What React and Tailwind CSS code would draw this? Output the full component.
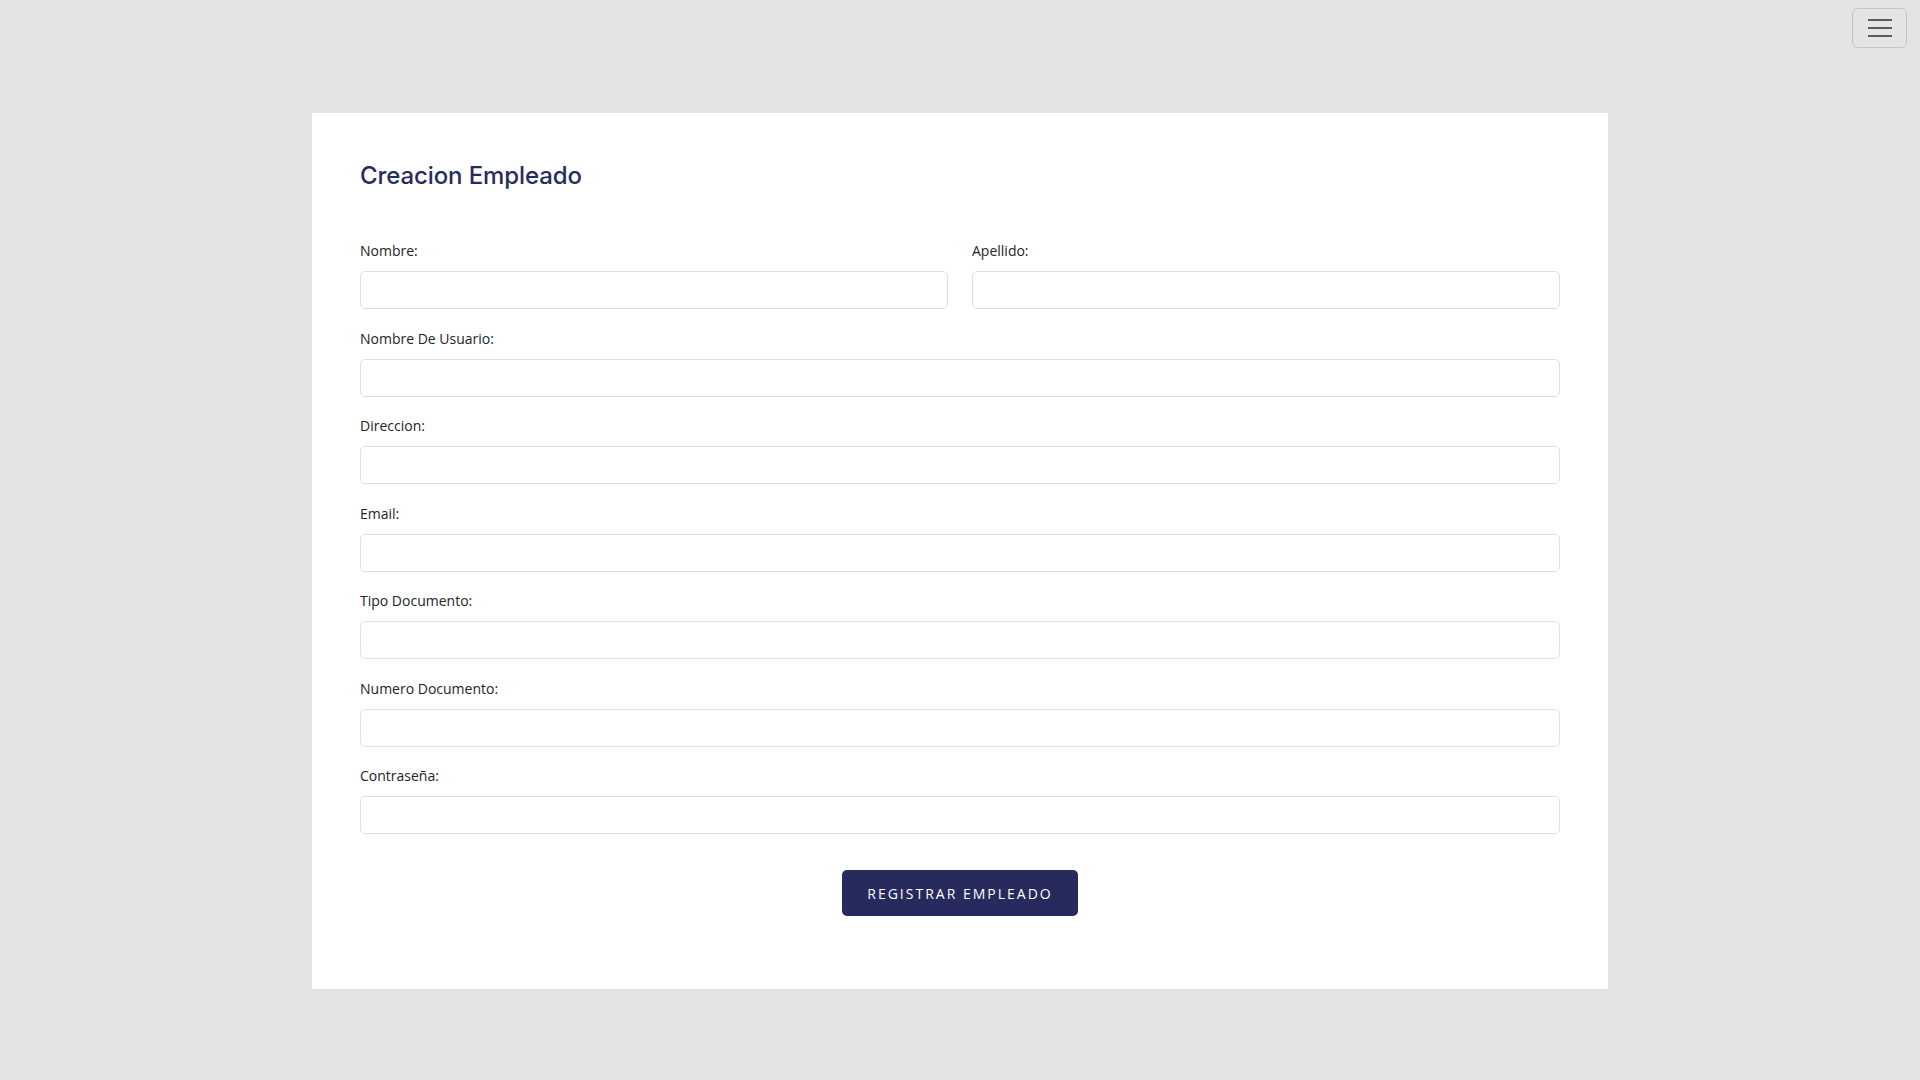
import React from "react";

const labelCls =
  "block text-[14px] leading-[21px] mb-[10px] text-[#212529] font-['Open_Sans','Noto_Sans',sans-serif]";
const inputCls =
  "block w-full h-[38px] rounded-[5px] border border-[#dee2e6] bg-white px-3 text-[14px] outline-none";

function Field({ label, type = "text" }) {
  return (
    <div className="flex flex-col">
      <label className={labelCls}>{label}</label>
      <input type={type} className={inputCls} />
    </div>
  );
}

export default function App() {
  return (
    <div className="min-h-[1080px] w-full bg-[#e4e4e4] font-['Open_Sans',sans-serif]">
      <div className="flex justify-end pt-[8px] pr-[13px]">
        <button className="flex h-[40px] w-[55px] flex-col items-center justify-center gap-[6px] rounded-[6px] border border-[#c6c6c6] bg-transparent">
          <span className="block h-[2px] w-[24px] bg-[#575c62]" />
          <span className="block h-[2px] w-[24px] bg-[#575c62]" />
          <span className="block h-[2px] w-[24px] bg-[#575c62]" />
        </button>
      </div>
      <div className="mx-auto mt-[65px] w-[1296px] bg-white px-[48px] pt-[48px] pb-[73px]">
        <h2 className="text-[24px] leading-[29px] font-medium text-[#272b5e] font-['Inter',sans-serif] tracking-[-0.1px]">
          Creacion Empleado
        </h2>
        <form className="mt-[50px] flex flex-col gap-[18.5px]" onSubmit={(e) => e.preventDefault()}>
          <div className="grid grid-cols-2 gap-[24px]">
            <Field label="Nombre:" />
            <Field label="Apellido:" />
          </div>
          <Field label="Nombre De Usuario:" />
          <Field label="Direccion:" />
          <Field label="Email:" type="email" />
          <Field label="Tipo Documento:" />
          <Field label="Numero Documento:" />
          <Field label="Contraseña:" type="password" />
          <div className="mt-[17.5px] flex justify-center">
            <button
              type="submit"
              className="h-[46px] w-[236px] rounded-[5px] bg-[#272a5d] text-[14px] font-medium tracking-[2px] text-white font-['Open_Sans',sans-serif]"
            >
              REGISTRAR EMPLEADO
            </button>
          </div>
        </form>
      </div>
    </div>
  );
}
